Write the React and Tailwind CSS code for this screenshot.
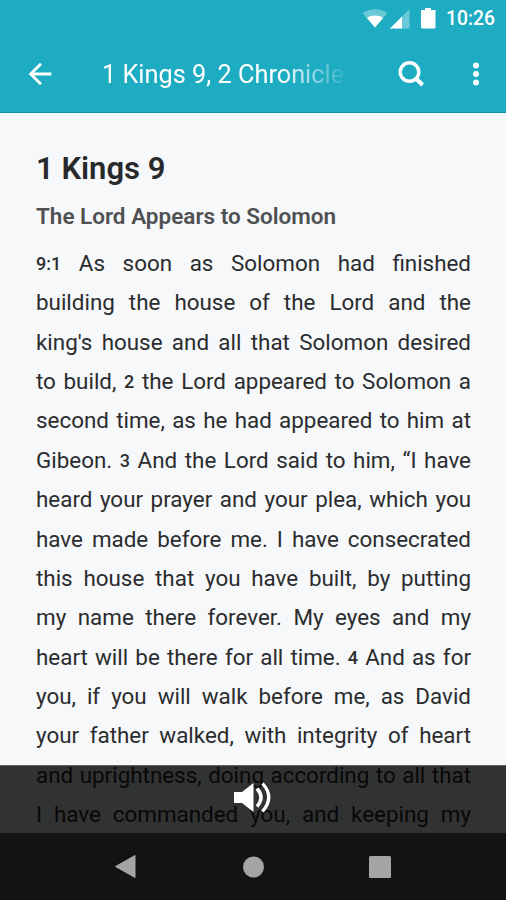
import React from "react";

const LINES = [
  [{ verse: "9:1" }, " As soon as Solomon had finished"],
  ["building the house of the Lord and the"],
  ["king's house and all that Solomon desired"],
  ["to build, ", { verse: "2" }, " the Lord appeared to Solomon a"],
  ["second time, as he had appeared to him at"],
  ["Gibeon. ", { verse: "3" }, " And the Lord said to him, “I have"],
  ["heard your prayer and your plea, which you"],
  ["have made before me. I have consecrated"],
  ["this house that you have built, by putting"],
  ["my name there forever. My eyes and my"],
  ["heart will be there for all time. ", { verse: "4" }, " And as for"],
  ["you, if you will walk before me, as David"],
  ["your father walked, with integrity of heart"],
  ["and uprightness, doing according to all that"],
  ["I have commanded you, and keeping my"],
];

function StatusBar() {
  return (
    <div className="flex h-[37px] items-center justify-end pr-[11px]">
      <svg width="75" height="24" viewBox="0 0 75 24" className="mr-[9px]" fill="#fff">
        <path d="M.5 6C8 .9 18 .9 25.500 6L13 20.500z" opacity=".35" />
        <path d="M5 11c4.600-3.200 11.400-3.200 16 0l-8 9.500z" />
        <path d="M47.500 2v19.500H28z" opacity=".35" />
        <path d="M40 9.500v12H28z" />
        <path d="M63 1h6v2h4.500v17a1.500 1.500 0 0 1-1.500 1.500H60.500A1.500 1.500 0 0 1 59 20V3h4z" />
      </svg>
      <span className="text-[19.300px] leading-none font-medium">10:26</span>
    </div>
  );
}

function AppBar() {
  return (
    <div className="flex h-[75px] items-center">
      <button className="ml-[23px] flex size-[34px] items-center justify-center pb-[2px]" aria-label="Back">
        <svg width="34" height="34" viewBox="0 0 24 24" fill="#fff" className="shrink-0">
          <path d="M20 11H7.830l5.590-5.590L12 4l-8 8 8 8 1.410-1.410L7.830 13H20v-2z" />
        </svg>
      </button>
      <h1 className="ml-[45px] w-[256px] pt-[1px] text-[25.300px] whitespace-nowrap [mask-image:linear-gradient(to_right,#000_69%,transparent_97%)]">
        1 Kings 9, 2 Chronicles
      </h1>
      <button className="ml-[36px] flex size-[34px] items-center justify-center pb-[2px]" aria-label="Search">
        <svg width="34" height="34" viewBox="0 0 34 34" fill="none" stroke="#fff" className="shrink-0">
          <circle cx="15.500" cy="15" r="9.300" strokeWidth="3.400" />
          <path d="M22 21.500l6.500 6.500" strokeWidth="4" />
        </svg>
      </button>
      <button className="ml-[31px] flex size-[34px] items-center justify-center pb-[2px]" aria-label="More">
        <svg width="8" height="26" viewBox="0 0 8 26" fill="#fff">
          <circle cx="4" cy="4.500" r="3" />
          <circle cx="4" cy="13" r="3" />
          <circle cx="4" cy="21.500" r="3" />
        </svg>
      </button>
    </div>
  );
}

function Chapter() {
  return (
    <main className="h-[720px] overflow-hidden pr-[35px] pl-[36px] text-[#2b2c2e]">
      <h2 className="mt-[36px] text-[31px] leading-[40px] font-semibold text-[#28292b]">1 Kings 9</h2>
      <h3 className="mt-[12px] text-[22.500px] leading-[30px] font-semibold text-[#4f5052]">
        The Lord Appears to Solomon
      </h3>
      <div className="mt-[13px] text-[22.400px]">
        {LINES.map((line, i) => (
          <p key={i} className="h-[39.36px] leading-[39.36px] whitespace-nowrap [text-align-last:justify]">
            {line.map((part, j) =>
              typeof part === "string" ? (
                part
              ) : (
                <b key={j} className="align-[1px] text-[18px] leading-none font-medium">
                  {part.verse}
                </b>
              )
            )}
          </p>
        ))}
      </div>
    </main>
  );
}

function AudioBar() {
  return (
    <div className="absolute inset-x-0 bottom-[67px] flex h-[68px] justify-center border-t border-[#606163] bg-black/80">
      <svg width="40" height="36" viewBox="0 0 40 36" className="mt-[13px]" fill="#fff">
        <path d="M1 13h8L20.500 4v29L9 24H1z" />
        <path d="M24 9.500q8 9 0 18" fill="none" stroke="#fff" strokeWidth="3.500" />
        <path d="M29.500 4.500q12.500 13.500 0 28" fill="none" stroke="#fff" strokeWidth="3.300" />
      </svg>
    </div>
  );
}

function NavBar() {
  return (
    <nav className="h-[67px] bg-[#111315]">
      <svg width="506" height="67" viewBox="0 0 506 67" fill="#a4a4a4">
        <path d="M115.500 33.500L135 22.500v22z" stroke="#a4a4a4" strokeLinejoin="round" />
        <circle cx="253.500" cy="34" r="10.500" />
        <rect x="369" y="23" width="22" height="22" rx="1.500" />
      </svg>
    </nav>
  );
}

export default function App() {
  return (
    <div className="relative flex h-[900px] w-[506px] flex-col overflow-hidden bg-[#f6f8fa] font-[Roboto,sans-serif]">
      <header className="h-[113px] shrink-0 border-b border-[#0e95ab] bg-[#1dacc2] text-white">
        <StatusBar />
        <AppBar />
      </header>
      <Chapter />
      <AudioBar />
      <NavBar />
    </div>
  );
}
